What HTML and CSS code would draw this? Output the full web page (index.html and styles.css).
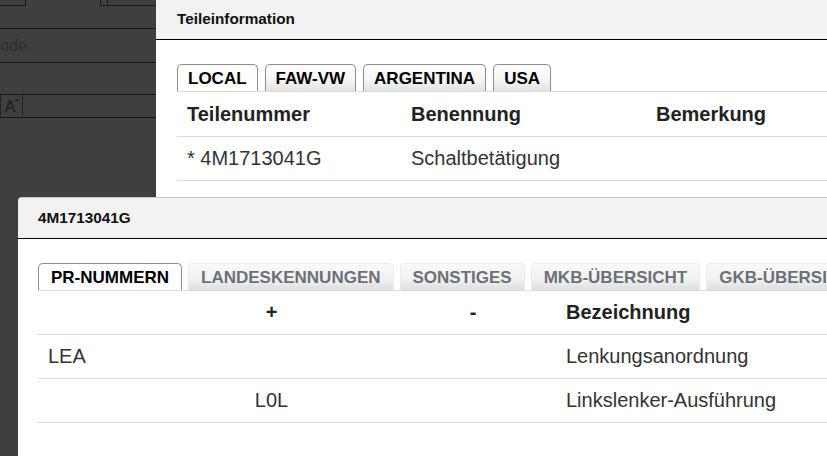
FILE: index.html
```html
<!DOCTYPE html>
<html lang="de">
<head>
<meta charset="utf-8">
<title>Teileinformation</title>
<link rel="stylesheet" href="styles.css">
</head>
<body>
<div class="page">
  <div class="bg-row r0">
    <span class="bg-box b1"></span>
    <span class="bg-box b2"><span class="b2-inner"></span></span>
  </div>
  <div class="bg-row r1"><span class="bg-label">ode</span></div>
  <div class="bg-row r2"></div>
  <div class="bg-row r3"><span class="font-btn">A<span class="caret"></span></span></div>
</div>

<section class="dialog d1">
  <header class="dlg-head">Teileinformation</header>
  <div class="dlg-body">
    <nav class="tabs tabs1">
      <span class="tab active">LOCAL</span>
      <span class="tab">FAW-VW</span>
      <span class="tab">ARGENTINA</span>
      <span class="tab">USA</span>
    </nav>
    <table class="grid g1">
      <colgroup><col class="c1"><col class="c2"><col></colgroup>
      <thead><tr><th>Teilenummer</th><th>Benennung</th><th>Bemerkung</th></tr></thead>
      <tbody><tr><td>* 4M1713041G</td><td>Schaltbetätigung</td><td></td></tr></tbody>
    </table>
  </div>
</section>

<section class="dialog d2">
  <header class="dlg-head">4M1713041G</header>
  <div class="dlg-body">
    <nav class="tabs tabs2">
      <span class="tab active">PR-NUMMERN</span>
      <span class="tab">LANDESKENNUNGEN</span>
      <span class="tab">SONSTIGES</span>
      <span class="tab">MKB-ÜBERSICHT</span>
      <span class="tab">GKB-ÜBERSICHT</span>
    </nav>
    <table class="grid g2">
      <colgroup><col class="k1"><col class="k2"><col class="k3"><col></colgroup>
      <thead><tr><th></th><th class="mid">+</th><th class="mid minus">-</th><th>Bezeichnung</th></tr></thead>
      <tbody>
        <tr><td>LEA</td><td class="mid"></td><td class="mid minus"></td><td>Lenkungsanordnung</td></tr>
        <tr><td></td><td class="mid">L0L</td><td class="mid minus"></td><td>Linkslenker-Ausführung</td></tr>
      </tbody>
    </table>
  </div>
</section>
</body>
</html>
```

FILE: styles.css
```css
* { box-sizing: border-box; }
html, body { margin: 0; padding: 0; }
body {
  width: 827px;
  height: 456px;
  overflow: hidden;
  position: relative;
  background: #3f3f3f;
  font-family: "Liberation Sans", Arial, sans-serif;
}

/* dimmed page behind the dialogs */
.page { width: 160px; }
.bg-row { border-bottom: 1px solid #161616; position: relative; }
.r0 { height: 29px; display: flex; align-items: flex-start; }
.r1 { height: 34px; display: flex; align-items: center; }
.r2 { height: 32px; }
.r3 { height: 23px; }
.bg-box { display: block; height: 6px; border: 1px solid #1a1a1a; border-top: none; }
.b1 { width: 27px; margin-left: -1px; }
.b2 { width: 60px; margin-left: 74px; display: flex; }
.b2-inner { display: block; margin-left: 6px; height: 5px; border-left: 1px solid #1a1a1a; }
.bg-label { font-size: 16px; color: #2b2e33; }
.font-btn {
  display: block; width: 23px; height: 22px;
  border-right: 1px solid #222; border-left: 1px solid #222;
  font-size: 17px; font-weight: bold; color: #262626; line-height: 24px; padding-left: 3px;
  position: relative;
}
.caret {
  position: absolute; top: 4px; right: 2px; width: 0; height: 0;
  border-left: 3px solid transparent; border-right: 3px solid transparent; border-top: 3px solid #262626;
}

/* dialogs */
.dialog {
  position: absolute;
  background: #fff;
  overflow: hidden;
}
.d1 { left: 156px; top: -1px; width: 720px; height: 220px; }
.d2 {
  left: 18px; top: 197px; width: 860px; height: 270px;
  border-top: 1px solid #c9c9c9;
  border-top-left-radius: 4px;
}
.dlg-head {
  height: 41px;
  background: #f2f2f2;
  border-bottom: 1px solid #000;
  font-size: 15.3px;
  font-weight: bold;
  color: #111;
  line-height: 40px;
}
.d1 .dlg-head { padding-left: 21px; }
.d2 .dlg-head { padding-left: 20px; }
.d1 .dlg-body { padding: 24px 0 0 21px; }
.d2 .dlg-body { padding: 24px 0 0 20px; }

.tabs { display: flex; height: 27px; align-items: flex-end; }
.tab {
  display: block;
  height: 27px;
  font-size: 17px;
  font-weight: bold;
  line-height: 27px;
  border-radius: 5px 5px 0 0;
  white-space: nowrap;
}
.tabs1 { gap: 7px; }
.tabs1 .tab {
  padding: 0 10px;
  color: #000;
  border: 1px solid #8d8d8d;
  border-bottom: none;
  background: linear-gradient(#ffffff 0%, #f4f4f4 60%, #e2e2e2 100%);
}
.tabs1 .tab.active { background: #fff; }
.tabs2 { gap: 6px; }
.tabs2 .tab {
  padding: 0 12px;
  color: #6b7178;
  border: 1px solid #ececec;
  border-bottom: none;
  background: linear-gradient(#f9f9f9 0%, #f1f1f1 60%, #dedede 100%);
}
.tabs2 .tab.active {
  color: #000;
  background: #fff;
  border-color: #8d8d8d;
}

/* tables */
.grid {
  border-collapse: collapse;
  table-layout: fixed;
  width: 100%;
  border-top: 1px solid #dcdcdc;
}
.grid th, .grid td {
  padding: 0 0 0 10px;
  border-bottom: 1px solid #dcdcdc;
  text-align: left;
  white-space: nowrap;
}
.grid tr { height: 44px; }
.g1 thead tr { height: 45px; }
.grid th { font-size: 20px; font-weight: bold; color: #222; }
.grid td { font-size: 20px; color: #333; }
.g1 .c1 { width: 224px; }
.g1 .c2 { width: 245px; }
.g2 .k1 { width: 133px; }
.g2 .k2 { width: 201px; }
.g2 .k3 { width: 184px; }
.grid .mid { text-align: center; padding: 0; }
.grid .minus { padding-left: 18px; }
```
